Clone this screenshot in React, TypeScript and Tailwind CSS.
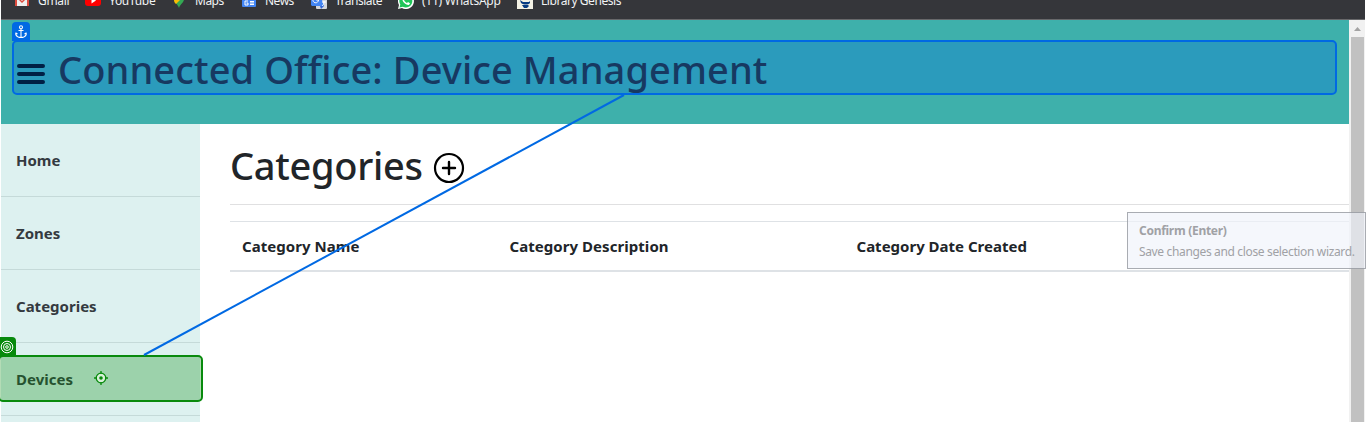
import type { ReactNode } from "react";

const FONT = "font-['Noto_Sans','Open_Sans',sans-serif]";

function Bookmark({ width, label, labelClass, children }: { width: string; label: string; labelClass: string; children: ReactNode }) {
  return (
    <div className={`flex shrink-0 items-center ${width}`}>
      <svg width="16" height="16" viewBox="0 0 16 16" className="mr-2 shrink-0">{children}</svg>
      <span className={`whitespace-nowrap ${labelClass}`}>{label}</span>
    </div>
  );
}

function BookmarksBar() {
  return (
    <div className="h-5 shrink-0 overflow-hidden border-b border-[#68686a] bg-[#35363a]">
      <div className="-mt-[7px] flex h-4 pl-[13px] text-[12px] leading-4 text-[#f1f3f4]">
        <Bookmark width="w-[71px]" label="Gmail" labelClass="tracking-[-0.3px]">
          <rect x="1" y="2" width="14" height="11" fill="#eee" />
          <path d="M1 2v11h2V5l5 5 5-5v8h2V2L8 8z" fill="#dd4b3e" />
        </Bookmark>
        <Bookmark width="w-[86px]" label="YouTube" labelClass="tracking-[-0.3px]">
          <rect y="2" width="16" height="11" rx="3" fill="#f00" />
          <path d="M6.5 4.5v6L11 7.5z" fill="#fff" />
        </Bookmark>
        <Bookmark width="w-[70px]" label="Maps" labelClass="tracking-[-0.5px]">
          <path d="M3 6a5 5 0 0 1 10 0c0 4-4 5-5 9C7 11 3 10 3 6z" fill="#34a853" />
          <path d="M3 7l4-4 3 3-5 5C4 10 3 9 3 7z" fill="#fbbc04" />
        </Bookmark>
        <Bookmark width="w-[70px]" label="News" labelClass="tracking-[-0.5px]">
          <rect x="2" width="12" height="10" fill="#ea4335" />
          <rect x="1" y="5" width="14" height="9" rx="1" fill="#4285f4" />
          <path d="M7 8H4v4h3v-2H5.5M9 8.5h4M9 10h4M9 11.5h4" stroke="#fff" fill="none" />
        </Bookmark>
        <Bookmark width="w-[87px]" label="Translate" labelClass="tracking-[-0.5px]">
          <rect x="5" y="4" width="11" height="12" rx="1" fill="#d4d7dc" />
          <path d="M0 1h9l4 12H1L0 12z" fill="#4285f4" />
          <path d="M9 13h4l-3 3z" fill="#3367d6" />
          <path d="M7.5 7H5.2M7.5 7A2.8 2.8 0 1 1 6 4.5M11 9h4M13 8v1c0 2-1 3-2 4" stroke="#fff" fill="none" />
        </Bookmark>
        <Bookmark width="w-[119px]" label="(11) WhatsApp" labelClass="tracking-[-0.25px]">
          <path d="M0 16l1-4a8 8 0 1 1 3 3z" fill="#fff" />
          <path d="M1.5 14.5l.8-3a6.5 6.5 0 1 1 2.5 2.3z" fill="#20c659" />
          <path d="M5 4l1.5 2-.5 1c.6 1.4 1.6 2.3 3 3l1-1 2 1.2c-.5 2-2 2-3.500 1.300C6 10.300 3 7 5 4z" fill="#fff" />
        </Bookmark>
        <Bookmark width="w-[120px]" label="Library Genesis" labelClass="tracking-[-0.45px]">
          <rect width="16" height="16" fill="#f3f2e5" />
          <path d="M3 7l3 2h6l1-1v2c-2 2-6 2-9 0zM5 12h6l1 1-2 2H7z" fill="#063b82" />
        </Bookmark>
      </div>
    </div>
  );
}

function SideItem({ label }: { label: string }) {
  return (
    <div className="flex h-[73px] shrink-0 items-center border-b border-[#c5dad9] pl-[15px] text-[15px] font-bold text-[#343a40]">
      <span>{label}</span>
    </div>
  );
}

function SelectionOverlay() {
  return (
    <>
      <div className="absolute left-3 top-[22px] flex h-[19px] w-[18px] items-center justify-center rounded-t-[4px] bg-[#0069e3]">
        <svg width="12" height="14" viewBox="0 0 12 14" fill="none" stroke="#fff" strokeWidth="1.1">
          <circle cx="6" cy="2.300" r="1.500" />
          <path d="M6 4v8.500M3.500 5.500h5M1 8v2c1 2 3 2.500 5 2.500s4-.5 5-2.500V8M.5 9.500L1 8l1.500 1M9.500 9L11 8l.5 1.500" />
        </svg>
      </div>
      <div className="absolute left-3 top-10 h-[55px] w-[1325px] rounded-[5px] border-2 border-[#0069e3] bg-[#0069e3]/30" />
      <div className="absolute left-0 top-[337px] flex h-[19px] w-4 items-center rounded-tr-[4px] bg-[#088a0d]">
        <svg width="14" height="14" viewBox="0 0 14 14" fill="none" stroke="#fff">
          <circle cx="7" cy="7" r="5.800" /><circle cx="7" cy="7" r="3.500" /><circle cx="7" cy="7" r="1.300" />
        </svg>
      </div>
      <div className="absolute left-[-2px] top-[355px] h-[47px] w-[205px] rounded-[5px] border-2 border-[#088a0d] bg-[#088a0d]/30" />
      <svg className="absolute left-[94px] top-[371px]" width="14" height="14" viewBox="0 0 14 14" fill="none">
        <circle cx="7" cy="7" r="4.800" fill="#d8f0d9" stroke="#088a0d" strokeWidth="1.300" />
        <path d="M7 0v3M7 11v3M0 7h3M11 7h3" stroke="#088a0d" strokeWidth="1.300" />
        <circle cx="7" cy="7" r="1.800" fill="#088a0d" />
      </svg>
      <svg className="pointer-events-none absolute left-0 top-0" width="1366" height="422">
        <path d="M624 95L144 355" stroke="#0069e3" strokeWidth="2" />
      </svg>
      <div className="absolute left-[1127px] top-[212px] h-[57px] w-[239px] whitespace-nowrap border border-[#777980]/60 bg-[#f0f3fb]/65 pl-[11px] pt-[9px] text-[12px] text-[#a0a1a5]">
        <div className="h-[21px] leading-[18px] font-bold tracking-[-0.28px]">Confirm (Enter)</div>
        <div className="leading-[18px] tracking-[-0.35px]">Save changes and close selection wizard.</div>
      </div>
    </>
  );
}

export default function App() {
  return (
    <div className={`relative flex h-[422px] w-[1366px] flex-col overflow-hidden bg-white px-px ${FONT}`}>
      <BookmarksBar />
      <div className="flex min-h-0 flex-1">
        <div className="flex w-[1348px] flex-col">
          <header className="flex h-[104px] shrink-0 bg-[#3eb0ab] pl-4 pt-[23px]">
            <svg className="mr-[13px] mt-[21px]" width="28" height="20" viewBox="0 0 28 20">
              <path d="M2 2h24M2 10h24M2 18h24" stroke="#000" strokeWidth="4" strokeLinecap="round" />
            </svg>
            <h1 className="whitespace-nowrap text-[38px] font-medium leading-[52px] tracking-[0.09px] text-[#212529]">Connected Office: Device Management</h1>
          </header>
          <div className="flex min-h-0 flex-1">
            <nav className="flex w-[199px] shrink-0 flex-col overflow-hidden bg-[#ddf1f0]">
              <SideItem label="Home" />
              <SideItem label="Zones" />
              <SideItem label="Categories" />
              <SideItem label="Devices" />
              <SideItem label="" />
            </nav>
            <main className="min-w-0 flex-1 pl-[30px]">
              <div className="flex h-[81px] border-b border-[#e0e0e1] pt-[15px]">
                <h2 className="w-[203px] whitespace-nowrap text-[38px] font-medium leading-[52px] tracking-[-0.3px] text-[#212529]">Categories</h2>
                <svg className="mt-[13px]" width="32" height="32" viewBox="0 0 32 32" fill="none" stroke="#000">
                  <circle cx="16" cy="16" r="14" strokeWidth="2.200" />
                  <path d="M10 16h12M16 10v12" strokeWidth="2.400" strokeLinecap="round" />
                </svg>
              </div>
              <div className="mt-4 flex h-[51px] items-center whitespace-nowrap border-b-2 border-t border-[#dee2e6] pl-3 text-[15px] font-bold text-[#212529]">
                <span className="w-[267.5px] tracking-[0.05px]">Category Name</span>
                <span className="w-[347px] tracking-[0.05px]">Category Description</span>
                <span>Category Date Created</span>
              </div>
            </main>
          </div>
        </div>
        <div className="flex w-4 flex-col items-center bg-[#f1f1f1]">
          <svg className="shrink-0" width="16" height="17" viewBox="0 0 16 17"><path d="M5 11h7L8.500 7z" fill="#a3a3a3" /></svg>
          <div className="w-[13px] flex-1 bg-[#c1c1c1]" />
        </div>
      </div>
      <SelectionOverlay />
    </div>
  );
}
